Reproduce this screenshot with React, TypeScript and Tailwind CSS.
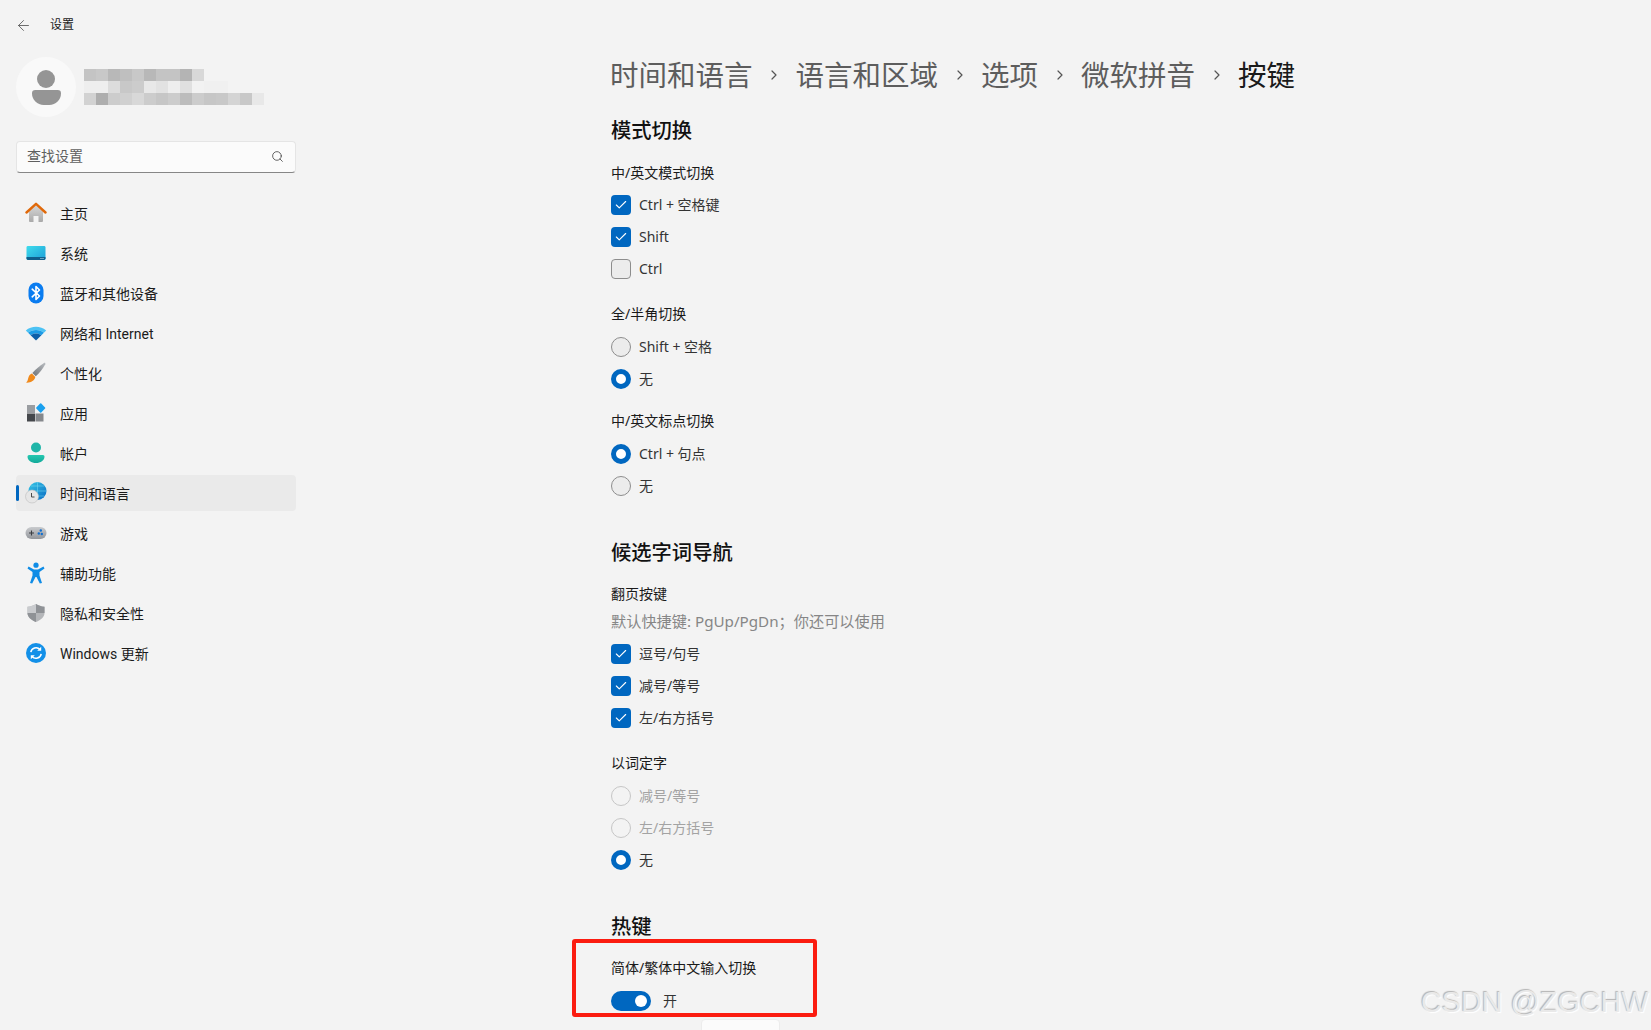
import { ArrowLeft, Check, ChevronRight, Search } from "lucide-react";
import type { ReactNode } from "react";

const avatarRows = [
  ["#c4c4c4", "#c8c8c8", "#b8b8b8", "#bfbfbf", "#c8c8c8", "#b8b8b8", "#c4c4c4", "#c4c4c4", "#b4b4b4", "#d8d8d8"],
  ["#eeeeee", "#eeeeee", "#dcdcdc", "#c8c8c8", "#cccccc", "#e8e8e8", "#e2e2e2", "#eeeeee", "#e0e0e0", "#f2f2f2", "#f0f0f0", "#f0f0f0"],
  ["#d2d2d2", "#aeaeae", "#cccccc", "#d0d0d0", "#d8d8d8", "#cccccc", "#c6c6c6", "#cccccc", "#bcbcbc", "#cccccc", "#c6c6c6", "#c8c8c8", "#d4d4d4", "#c8c8c8", "#e8e8e8"],
];

function HomeIcon() {
  return (
    <svg width="22" height="22" viewBox="0 0 22 22">
      <defs>
        <linearGradient id="homeBody" x1="0" y1="0" x2="0" y2="1">
          <stop offset="0" stopColor="#d8d8d8" />
          <stop offset="1" stopColor="#a9a9a9" />
        </linearGradient>
      </defs>
      <path d="M4 9.5 11 3l7 6.5V19a1 1 0 0 1-1 1h-3.5v-6h-5v6H5a1 1 0 0 1-1-1z" fill="url(#homeBody)" />
      <path d="M1.5 10.5 11 1.8l9.5 8.7" fill="none" stroke="#e0690a" strokeWidth="2.4" strokeLinecap="round" strokeLinejoin="round" />
    </svg>
  );
}

function SystemIcon() {
  return (
    <svg width="20" height="20" viewBox="0 0 20 20">
      <defs>
        <linearGradient id="sysTop" x1="0" y1="0" x2="1" y2="1">
          <stop offset="0" stopColor="#3fdcec" />
          <stop offset="1" stopColor="#1c9fd8" />
        </linearGradient>
      </defs>
      <rect x="0.5" y="3" width="19" height="14" rx="1.4" fill="url(#sysTop)" />
      <path d="M.5 14h19v1.6A1.4 1.4 0 0 1 18.100 17H1.900A1.400 1.400 0 0 1 .5 15.600z" fill="#0f5f8c" />
      <rect x="14.500" y="15" width="1" height="1" fill="#bfe8f5" />
      <rect x="16.500" y="15" width="1" height="1" fill="#bfe8f5" />
    </svg>
  );
}

function BluetoothIcon() {
  return (
    <svg width="20" height="22" viewBox="0 0 20 22">
      <rect x="2.500" y="0.500" width="15" height="21" rx="7.500" fill="#0a7cf0" />
      <path d="M6.200 7.200 13.500 14 10 17.500v-13L13.500 8 6.200 14.800" fill="none" stroke="#fff" strokeWidth="1.600" strokeLinejoin="round" strokeLinecap="round" />
    </svg>
  );
}

function WifiIcon() {
  return (
    <svg width="22" height="20" viewBox="0 0 22 20">
      <path d="M.8 7.400C6.500 2.400 15.500 2.400 21.200 7.400L18.900 9.800C14.500 6 7.500 6 3.100 9.800z" fill="#4cc2f4" />
      <path d="M3.100 9.800C7.500 6 14.500 6 18.900 9.800L16.400 12.300C13.300 9.800 8.700 9.800 5.600 12.300z" fill="#1c9be6" />
      <path d="M5.600 12.300C8.700 9.800 13.300 9.800 16.400 12.300L11 17.500z" fill="#0d5ea8" />
    </svg>
  );
}

function BrushIcon() {
  return (
    <svg width="22" height="22" viewBox="0 0 22 22">
      <defs>
        <linearGradient id="brushHandle" x1="0" y1="1" x2="1" y2="0">
          <stop offset="0" stopColor="#6e7378" />
          <stop offset="1" stopColor="#b9bcc0" />
        </linearGradient>
      </defs>
      <path d="M19 1c.9-.5 1.700.300 1.300 1.200-2.300 4.300-6 9-9.500 12l-3.400-3.200C10.500 7.500 14.800 3.500 19 1z" fill="url(#brushHandle)" />
      <path d="M7 11.600 10.300 15c-.6 3.500-4.500 6-9.300 5.600 2-1.300 1.700-3.300 2.500-5.400.7-1.800 2-3.200 3.500-3.600z" fill="#f08a1c" />
    </svg>
  );
}

function AppsIcon() {
  return (
    <svg width="20" height="20" viewBox="0 0 20 20">
      <rect x="1" y="2" width="8" height="8" fill="#9a9da1" />
      <rect x="1" y="10.500" width="8" height="8" fill="#44474b" />
      <rect x="9.500" y="10.500" width="8" height="8" fill="#85888c" />
      <rect x="11.200" y="1.500" width="7" height="7" rx="0.800" fill="#1aa0ee" transform="rotate(45 14.700 5)" />
    </svg>
  );
}

function AccountIcon() {
  return (
    <svg width="20" height="22" viewBox="0 0 20 22">
      <defs>
        <linearGradient id="accountFill" x1="0" y1="0" x2="0" y2="1">
          <stop offset="0" stopColor="#25c8b0" />
          <stop offset="1" stopColor="#12a99a" />
        </linearGradient>
      </defs>
      <circle cx="10" cy="5.500" r="5" fill="#1fb5a8" />
      <path d="M3 13h14a1.500 1.500 0 0 1 1.500 1.500c0 4-4 6.500-8.500 6.500S1.500 18.500 1.500 14.500A1.500 1.500 0 0 1 3 13z" fill="url(#accountFill)" />
    </svg>
  );
}

function TimeIcon() {
  return (
    <svg width="22" height="22" viewBox="0 0 22 22">
      <defs>
        <linearGradient id="globeFill" x1="0" y1="0" x2="1" y2="1">
          <stop offset="0" stopColor="#35c6e6" />
          <stop offset="1" stopColor="#0b6cc4" />
        </linearGradient>
      </defs>
      <circle cx="12.500" cy="9" r="9" fill="url(#globeFill)" />
      <path d="M12.500 0v18M3.500 9h18M6 4h13M6 14h13" stroke="#7ddcf0" strokeWidth="0.500" fill="none" />
      <circle cx="7" cy="14.500" r="6.500" fill="#e6e6e6" stroke="#bdbdbd" strokeWidth="0.600" />
      <path d="M6.500 11v4h3" fill="none" stroke="#4a4a4a" strokeWidth="1" />
    </svg>
  );
}

function GameIcon() {
  return (
    <svg width="22" height="16" viewBox="0 0 22 16">
      <defs>
        <linearGradient id="padFill" x1="0" y1="0" x2="0" y2="1">
          <stop offset="0" stopColor="#c9cbce" />
          <stop offset="1" stopColor="#93969b" />
        </linearGradient>
      </defs>
      <rect x="0.500" y="2" width="21" height="12" rx="6" fill="url(#padFill)" />
      <path d="M4 8h5M6.500 5.500v5" stroke="#3a3d42" strokeWidth="1.100" />
      <circle cx="15.800" cy="5.500" r="1.200" fill="#0f6fd0" />
      <circle cx="13.800" cy="8.500" r="1.200" fill="#0f6fd0" />
      <circle cx="16.800" cy="9" r="1.200" fill="#0f6fd0" />
    </svg>
  );
}

function AccessIcon() {
  return (
    <svg width="20" height="22" viewBox="0 0 20 22">
      <circle cx="10" cy="3.200" r="2.600" fill="#0f8ce6" />
      <path d="M2.500 4.500 8 7.500h4l5.500-3 1 2L13.500 10v3.500l2.500 7.500-2.200.5L10.500 15h-1L6.200 21.500 4 21l2.500-7.500V10L1.500 6.500z" fill="#0f8ce6" />
    </svg>
  );
}

function ShieldIcon() {
  return (
    <svg width="20" height="20" viewBox="0 0 20 20">
      <path d="M10 1c2.500 1.600 5 2.400 8.500 2.700V10c0 4-3.500 7-8.500 9-5-2-8.500-5-8.500-9V3.700C5 3.400 7.500 2.600 10 1z" fill="#b4b6b9" />
      <path d="M10 1c2.500 1.600 5 2.400 8.500 2.700V10H10zM10 10v9c-5-2-8.500-5-8.500-9z" fill="#8f9296" />
      <path d="M10 1C7.500 2.600 5 3.400 1.500 3.700V10H10z" fill="#c9cbce" />
    </svg>
  );
}

function UpdateIcon() {
  return (
    <svg width="20" height="20" viewBox="0 0 20 20">
      <circle cx="10" cy="10" r="10" fill="#1390e8" />
      <path d="M4.800 9.200A5.300 5.300 0 0 1 14 6.500M15.200 10.800A5.300 5.300 0 0 1 6 13.500" fill="none" stroke="#fff" strokeWidth="1.500" />
      <path d="M15.200 3.800v4h-4zM4.800 16.200v-4h4z" fill="#fff" />
    </svg>
  );
}

const navItems: { label: string; icon: ReactNode; active?: boolean }[] = [
  { label: "主页", icon: <HomeIcon /> },
  { label: "系统", icon: <SystemIcon /> },
  { label: "蓝牙和其他设备", icon: <BluetoothIcon /> },
  { label: "网络和 Internet", icon: <WifiIcon /> },
  { label: "个性化", icon: <BrushIcon /> },
  { label: "应用", icon: <AppsIcon /> },
  { label: "帐户", icon: <AccountIcon /> },
  { label: "时间和语言", icon: <TimeIcon />, active: true },
  { label: "游戏", icon: <GameIcon /> },
  { label: "辅助功能", icon: <AccessIcon /> },
  { label: "隐私和安全性", icon: <ShieldIcon /> },
  { label: "Windows 更新", icon: <UpdateIcon /> },
];

function Sidebar() {
  return (
    <aside className="w-[312px] shrink-0 pl-4">
      <div className="flex h-[50px] items-center">
        <ArrowLeft className="-ml-[1px] h-[17px] w-[17px] text-[#555]" strokeWidth={1.2} />
        <span className="ml-[18px] text-xs text-[#1a1a1a]">设置</span>
      </div>
      <div className="mt-[7px] flex items-center">
        <div className="flex h-[60px] w-[60px] flex-col items-center justify-center rounded-full bg-[#f9f9f9]">
          <div className="h-[18px] w-[18px] rounded-full bg-[#959595]" />
          <div className="mt-[2px] h-[15px] w-[29px] rounded-b-[14px] rounded-t-[4px] bg-[#959595]" />
        </div>
        <div className="ml-2">
          {avatarRows.map((row, i) => (
            <div key={i} className="flex">
              {row.map((color, j) => (
                <div key={j} className="h-3 w-3" style={{ backgroundColor: color }} />
              ))}
            </div>
          ))}
        </div>
      </div>
      <div className="mt-6 flex h-8 w-[280px] items-center justify-between rounded-[4px] border border-[#e5e5e5] border-b-[#868686] bg-[#fbfbfb] pb-[2px] pl-[10px] pr-[11px]">
        <span className="text-sm leading-5 text-[#5f5f5f]">查找设置</span>
        <Search className="h-[13px] w-[13px] text-[#444]" strokeWidth={1.5} />
      </div>
      <nav className="mt-[22px] flex w-[280px] flex-col gap-1">
        {navItems.map((item) => (
          <div
            key={item.label}
            className={`relative flex h-9 items-center rounded-[4px] ${item.active ? "bg-[#eaeaea]" : ""}`}
          >
            {item.active && <div className="absolute left-0 top-[10px] h-4 w-[3px] rounded-full bg-[#0067c0]" />}
            <div className="flex w-[44px] shrink-0 justify-center pl-[1px] pr-[5px]">{item.icon}</div>
            <span className="pt-[2px] text-[14px] leading-5 text-[#1b1b1b]">{item.label}</span>
          </div>
        ))}
      </nav>
    </aside>
  );
}

function CheckRow({ label, checked }: { label: string; checked?: boolean }) {
  return (
    <div className="flex h-8 items-center">
      {checked ? (
        <div className="flex h-5 w-5 items-center justify-center rounded-[4px] bg-[#0067c0]">
          <Check className="h-[14px] w-[14px] text-white" strokeWidth={1.9} />
        </div>
      ) : (
        <div className="h-5 w-5 rounded-[4px] border border-[#8d8d8d] bg-[#ececec]" />
      )}
      <span className="ml-2 text-sm leading-5 text-[#333]">{label}</span>
    </div>
  );
}

function RadioRow({ label, checked, disabled }: { label: string; checked?: boolean; disabled?: boolean }) {
  let dot = "border border-[#8d8d8d] bg-[#ececec]";
  if (checked) dot = "border-[5px] border-[#0067c0] bg-white";
  if (disabled) dot = "border border-[#c6c6c6] bg-[#f3f3f3]";
  return (
    <div className="flex h-8 items-center">
      <div className={`h-5 w-5 rounded-full ${dot}`} />
      <span className={`ml-2 text-sm leading-5 ${disabled ? "text-[#a3a3a3]" : "text-[#333]"}`}>{label}</span>
    </div>
  );
}

function Breadcrumb() {
  const parts = ["时间和语言", "语言和区域", "选项", "微软拼音"];
  return (
    <div className="-ml-[1px] flex h-10 items-center text-[28.5px] leading-10 text-[#5d5d5d]">
      {parts.map((part) => (
        <div key={part} className="flex items-center">
          <span>{part}</span>
          <div className="flex w-[43px] justify-center">
            <ChevronRight className="h-4 w-4 text-[#555]" strokeWidth={1.8} />
          </div>
        </div>
      ))}
      <span className="text-[#1a1a1a]">按键</span>
    </div>
  );
}

function SectionTitle({ children, className }: { children: ReactNode; className: string }) {
  return <h2 className={`h-7 text-[20.3px] font-medium leading-7 text-[#111] ${className}`}>{children}</h2>;
}

function GroupLabel({ children, className }: { children: ReactNode; className: string }) {
  return <div className={`h-5 text-sm leading-5 text-[#1a1a1a] ${className}`}>{children}</div>;
}

function Content() {
  return (
    <main className="flex-1 pl-[299px] pt-[55px] font-['Noto_Sans','Noto_Sans_CJK_SC',sans-serif]">
      <Breadcrumb />

      <SectionTitle className="mt-[21px]">模式切换</SectionTitle>
      <GroupLabel className="mt-[19px]">中/英文模式切换</GroupLabel>
      <div className="mt-[6px]">
        <CheckRow label="Ctrl + 空格键" checked />
        <CheckRow label="Shift" checked />
        <CheckRow label="Ctrl" />
      </div>

      <GroupLabel className="mt-[19px]">全/半角切换</GroupLabel>
      <div className="mt-[7px]">
        <RadioRow label="Shift + 空格" />
        <RadioRow label="无" checked />
      </div>

      <GroupLabel className="mt-4">中/英文标点切换</GroupLabel>
      <div className="mt-[7px]">
        <RadioRow label="Ctrl + 句点" checked />
        <RadioRow label="无" />
      </div>

      <SectionTitle className="mt-9">候选字词导航</SectionTitle>
      <GroupLabel className="mt-[18px]">翻页按键</GroupLabel>
      <div className="mt-[7px] h-5 text-[15.2px] leading-5 text-[#868686]">默认快捷键: PgUp/PgDn；你还可以使用</div>
      <div className="mt-[7px]">
        <CheckRow label="逗号/句号" checked />
        <CheckRow label="减号/等号" checked />
        <CheckRow label="左/右方括号" checked />
      </div>

      <GroupLabel className="mt-[19px]">以词定字</GroupLabel>
      <div className="mt-[7px]">
        <RadioRow label="减号/等号" disabled />
        <RadioRow label="左/右方括号" disabled />
        <RadioRow label="无" checked />
      </div>

      <SectionTitle className="mt-9">热键</SectionTitle>
      <GroupLabel className="mt-[18px]">简体/繁体中文输入切换</GroupLabel>
      <div className="mt-[7px] flex h-8 items-center">
        <div className="flex h-5 w-10 items-center justify-end rounded-full bg-[#0067c0] pr-1">
          <div className="h-3 w-3 rounded-full bg-white" />
        </div>
        <span className="ml-3 text-sm leading-5 text-[#333]">开</span>
      </div>
    </main>
  );
}

export default function App() {
  return (
    <div className="relative flex h-[1030px] w-[1651px] overflow-hidden bg-[#f3f3f3] font-['Roboto','Noto_Sans_CJK_SC',sans-serif]">
      <Sidebar />
      <Content />

      {/* red annotation drawn over the screenshot */}
      <div className="absolute left-[572px] top-[939px] h-[78px] w-[245px] rounded-[3px] border-4 border-[#fb1c10]" />
      {/* edge of a tooltip cut by the window */}
      <div className="absolute left-[701px] top-[1019px] h-5 w-[79px] rounded-t-[4px] border border-[#ececec] bg-[#fbfbfb]" />
      {/* watermark */}
      <div className="absolute left-[1421px] top-[985px] whitespace-nowrap font-['Liberation_Sans',sans-serif] text-[28.8px] leading-[34px] text-[#e9e9e9] [text-shadow:-1px_-1px_1px_#b4b4b4,1px_1px_1px_#ffffff]">
        CSDN @ZGCHW
      </div>
    </div>
  );
}
